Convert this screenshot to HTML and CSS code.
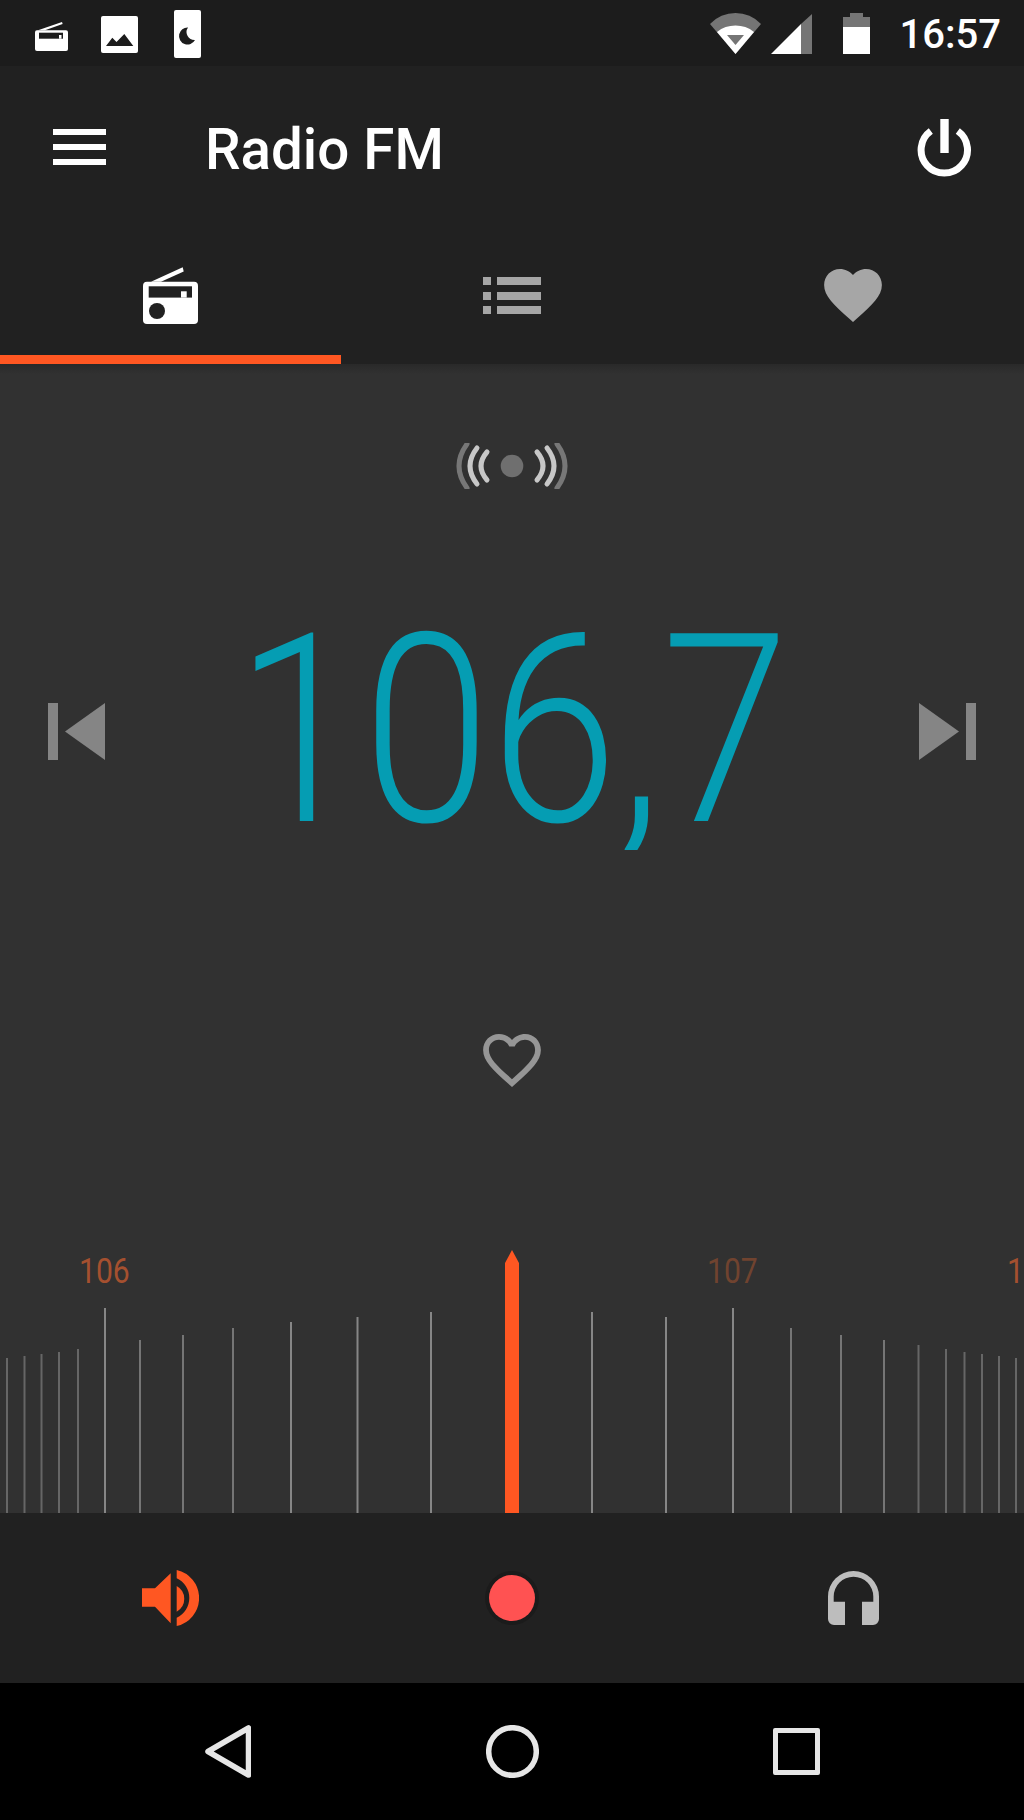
FILE: index.html
```
<!DOCTYPE html>
<html lang="en">
<head>
    <title>Radio FM</title>
    <link rel="stylesheet" href="styles.css">
</head>

<body>
    <div class="phone">
        <div class="status">
            <svg class="ic-s-radio" viewBox="0 -12 33 48">
                <path class="white" d="M3 8.3 27 0l.6 2L10 8.3z"/>
                <rect class="white" y="8.3" width="33" height="20.7" rx="2"/>
                <rect class="cut" x="4" y="10.7" width="24" height="6"/>
                <rect class="white" x="24" y="13" width="2.5" height="3.7"/>
            </svg>
            <svg class="ic-s-image" viewBox="0 -6 37 48">
                <rect class="white" width="37" height="37" rx="2"/>
                <path class="cut" d="M5 30l6.3-8.3 4.2 4.3 7.8-8 9 12z"/>
            </svg>
            <svg class="ic-s-phone" viewBox="0 0 27 48">
                <rect class="white" width="27" height="48" rx="2"/>
                <path class="cut" d="M14 17.5a8.5 8.5 0 1 0 7 12.5 8 8 0 0 1-7-12.5z"/>
            </svg>
            <div class="status-right">
                <svg class="ic-s-wifi" viewBox="0 -3 51 48">
                    <path class="dim" d="M0 11A35 35 0 0 1 51 11L25.5 41z"/>
                    <path class="white" d="M7 19A30 30 0 0 1 44 19L25.5 41z"/>
                    <path class="dim" d="M17 22H34L25.5 32z"/>
                </svg>
                <svg class="ic-s-signal" viewBox="0 -4 41 48">
                    <path class="white" d="M0 40H30V10z"/>
                    <path class="dim" d="M30 10 41 0V40H30z"/>
                </svg>
                <svg class="ic-s-battery" viewBox="0 -3 27 48">
                    <path class="dim" d="M7 0H20V4H27V14H0V4H7z"/>
                    <rect class="white" y="14" width="27" height="27"/>
                </svg>
                <span class="time">16:57</span>
            </div>
        </div>

        <div class="toolbar">
            <div class="menu"><span></span><span></span><span></span></div>
            <h1 class="title">Radio FM</h1>
            <svg class="ic-power" viewBox="0 0 55 58">
                <path class="power-ring" d="M13.8 12A23.2 23.2 0 1 0 40.8 12"/>
                <rect class="white" x="23.3" width="8.4" height="34"/>
            </svg>
        </div>

        <div class="tabs">
            <div class="tab active">
                <svg class="ic-tab-radio" viewBox="0 0 55 57">
                    <path class="white" d="M8 14.7 39.7.3l1 4.2L18 14.7z"/>
                    <rect class="white" y="14.7" width="55" height="42.3" rx="4"/>
                    <rect class="cut-tab" x="5.7" y="19.3" width="43.3" height="11.3"/>
                    <rect class="white" x="38" y="24.3" width="5.7" height="6.3"/>
                    <circle class="cut-tab" cx="14" cy="44" r="8"/>
                </svg>
            </div>
            <div class="tab">
                <svg class="ic-tab-list" viewBox="0 0 58 37">
                    <rect class="grey" width="8" height="8"/>
                    <rect class="grey" x="14" width="44" height="8"/>
                    <rect class="grey" y="15" width="8" height="8"/>
                    <rect class="grey" x="14" y="15" width="44" height="8"/>
                    <rect class="grey" y="29" width="8" height="8"/>
                    <rect class="grey" x="14" y="29" width="44" height="8"/>
                </svg>
            </div>
            <div class="tab">
                <svg class="ic-heart" viewBox="2 3 20 18.35">
                    <path class="grey" d="M12 21.35l-1.45-1.32C5.4 15.36 2 12.28 2 8.5 2 5.42 4.42 3 7.5 3c1.74 0 3.41.81 4.5 2.09C13.09 3.81 14.76 3 16.5 3 19.58 3 22 5.42 22 8.5c0 3.78-3.4 6.86-8.55 11.54L12 21.35z"/>
                </svg>
            </div>
        </div>

        <div class="tuner">
            <svg class="ic-signal" viewBox="-3 0 116 46">
                <g class="wave-out">
                    <path d="M10 1Q-6 23 10 45"/>
                    <path d="M100 1Q116 23 100 45"/>
                </g>
                <g class="wave-in">
                    <path d="M20 5Q6 23 20 41"/>
                    <path d="M90 5Q104 23 90 41"/>
                    <path d="M30 9Q18 23 30 37"/>
                    <path d="M80 9Q92 23 80 37"/>
                </g>
                <circle class="wave-dot" cx="55" cy="23" r="11.3"/>
            </svg>

            <div class="freq-row">
                <svg class="ic-skip" viewBox="0 0 57 57">
                    <rect class="skip" width="10" height="57"/>
                    <path class="skip" d="M17 28.5 57 0V57z"/>
                </svg>
                <div class="freq">106,7</div>
                <svg class="ic-skip" viewBox="0 0 57 57">
                    <rect class="skip" x="47" width="10" height="57"/>
                    <path class="skip" d="M40 28.5 0 0V57z"/>
                </svg>
            </div>

            <svg class="ic-fav" viewBox="2 3 20 18.35">
                <path class="fav" d="M16.5 3c-1.74 0-3.41.81-4.5 2.09C10.91 3.81 9.24 3 7.5 3 4.42 3 2 5.42 2 8.5c0 3.78 3.4 6.86 8.55 11.54L12 21.35l1.45-1.32C18.6 15.36 22 12.28 22 8.5 22 5.42 19.58 3 16.5 3zm-4.4 15.55l-.1.1-.1-.1C7.14 14.24 4 11.39 4 8.5 4 6.5 5.5 5 7.5 5c1.54 0 3.04.99 3.57 2.36h1.87C13.46 5.99 14.96 5 16.5 5c2 0 3.5 1.5 3.5 3.5 0 2.89-3.14 5.74-7.9 10.05z"/>
            </svg>

            <div class="dial">
                <span class="mark mark-106">106</span>
                <span class="mark mark-107">107</span>
                <span class="mark mark-108">1</span>
                <svg class="dial-ticks" viewBox="0 0 1024 273">
                    <g class="tick-far">
                        <path d="M7 118V273M24.5 116V273M41.5 114V273M59 112V273M78 109V273"/>
                        <path d="M1016 118V273M999 116V273M982 114V273M964.5 112V273M946 109V273M918.5 105V273"/>
                    </g>
                    <g class="tick-mid">
                        <path d="M140 100V273M183 95V273M233 88V273"/>
                        <path d="M884 100V273M841 95V273M791 88V273"/>
                    </g>
                    <g class="tick-near">
                        <path d="M105 68V273M291 82V273M357.5 77V273M431 72V273"/>
                        <path d="M592 72V273M666 77V273M733 68V273"/>
                    </g>
                    <path class="needle" d="M512 10 519 23V273H505V23z"/>
                </svg>
            </div>
        </div>

        <div class="controls">
            <svg class="ic-speaker" viewBox="0 0 57 56">
                <path class="orange" d="M0 18.3H13L28.7 3.3V53.3L13 36.7H0z"/>
                <path class="orange" d="M34.7 0A28.7 28.7 0 0 1 34.7 56V47.7A21.7 21.7 0 0 0 34.7 8.3z"/>
                <path class="orange" d="M34.7 16A14.7 14.7 0 0 1 34.7 41.7z"/>
            </svg>
            <div class="record"></div>
            <svg class="ic-phones" viewBox="0 0 51 54">
                <path class="phones" d="M0 25.5A25.5 25.5 0 0 1 51 25.5V48A6 6 0 0 1 45 54H34V30.7H45.3V25.5A19.8 19.8 0 0 0 5.7 25.5V30.7H17V54H6A6 6 0 0 1 0 48z"/>
            </svg>
        </div>

        <div class="nav">
            <svg class="ic-back" viewBox="0 0 46 53">
                <path class="nav-line" d="M3 26.5 43.5 3V50z"/>
            </svg>
            <svg class="ic-home" viewBox="0 0 53 53">
                <circle class="nav-line" cx="26.5" cy="26.5" r="23.8"/>
            </svg>
            <div class="nav-square"></div>
        </div>
    </div>
</body>

</html>
```

FILE: styles.css
```
* {
    box-sizing: border-box;
}

body {
    margin: 0;
    background-color: #000;
    font-family: Roboto, "Noto Sans", sans-serif;
}

svg {
    display: block;
    flex: none;
}

.phone {
    width: 1024px;
    height: 1820px;
    display: flex;
    flex-direction: column;
}

.white {
    fill: #fff;
}

.cut {
    fill: #1c1c1c;
}

.cut-tab {
    fill: #212121;
}

.dim {
    fill: #757575;
}

.grey {
    fill: #a6a6a6;
}

.orange {
    fill: #ff5722;
}

/* status bar */
.status {
    height: 66px;
    padding: 10px 23px 0 35px;
    display: flex;
    align-items: flex-start;
    background-color: #1c1c1c;
}

.status svg {
    height: 48px;
}

.ic-s-radio {
    width: 33px;
}

.ic-s-image {
    width: 37px;
    margin-left: 33px;
}

.ic-s-phone {
    width: 27px;
    margin-left: 36px;
}

.status-right {
    margin-left: auto;
    display: flex;
    align-items: flex-start;
}

.ic-s-wifi {
    width: 51px;
}

.ic-s-signal {
    width: 41px;
    margin-left: 10px;
}

.ic-s-battery {
    width: 27px;
    margin-left: 31px;
}

.time {
    margin-left: 30px;
    font-size: 40px;
    font-weight: 500;
    line-height: 50px;
    color: #fff;
}

/* toolbar */
.toolbar {
    height: 166px;
    padding: 0 52px 0 53px;
    display: flex;
    align-items: center;
    background-color: #212121;
}

.menu {
    width: 53px;
    margin-bottom: 4px;
    display: flex;
    flex-direction: column;
    gap: 9px;
}

.menu span {
    height: 6px;
    background-color: #fff;
}

.title {
    margin: 2px 0 0 99px;
    font-size: 56.5px;
    font-weight: 500;
    line-height: 66px;
    color: #fff;
}

.ic-power {
    width: 55px;
    height: 58px;
    margin-left: auto;
    margin-bottom: 3px;
}

.power-ring {
    fill: none;
    stroke: #fff;
    stroke-width: 7;
}

/* tabs */
.tabs {
    display: grid;
    grid-template-columns: 1fr 1fr 1fr;
    background-color: #212121;
}

.tab {
    height: 132px;
    padding-top: 4px;
    display: flex;
    align-items: center;
    justify-content: center;
    border-bottom: 9px solid transparent;
}

.tab.active {
    border-bottom-color: #ff5722;
}

.ic-tab-radio {
    width: 55px;
    height: 57px;
}

.ic-tab-list {
    width: 58px;
    height: 37px;
}

.ic-heart {
    width: 58px;
    height: 53px;
}

/* tuner */
.tuner {
    height: 1149px;
    padding-top: 79px;
    display: flex;
    flex-direction: column;
    align-items: center;
    background: linear-gradient(#292929, #313131 10px);
}

.ic-signal {
    width: 116px;
    height: 46px;
}

.wave-out path,
.wave-in path {
    fill: none;
    stroke-width: 5;
    stroke-linecap: round;
}

.wave-out path {
    stroke: #777;
}

.wave-in path {
    stroke: #c8c8c8;
}

.wave-dot {
    fill: #6f6f6f;
}

.freq-row {
    width: 100%;
    height: 220px;
    margin-top: 132px;
    padding: 0 48px;
    display: flex;
    align-items: center;
    justify-content: space-between;
}

.ic-skip {
    width: 57px;
    height: 57px;
}

.skip {
    fill: #858585;
}

.freq {
    font-size: 264px;
    font-weight: 300;
    line-height: 220px;
    color: #059db3;
    transform: scaleX(0.87);
    clip-path: inset(0 0 -9px 0);
}

.ic-fav {
    width: 58px;
    height: 53px;
    margin-top: 193px;
}

.fav {
    fill: #969696;
}

.dial {
    position: relative;
    width: 100%;
    height: 273px;
    margin-top: auto;
}

.dial-ticks {
    width: 1024px;
    height: 273px;
}

.tick-far path,
.tick-mid path,
.tick-near path {
    fill: none;
    stroke-width: 2;
}

.tick-far path {
    stroke: #666;
}

.tick-mid path {
    stroke: #757575;
}

.tick-near path {
    stroke: #868686;
}

.needle {
    fill: #ff5722;
}

.mark {
    position: absolute;
    top: 12px;
    font-size: 35px;
    line-height: 40px;
    color: #a5502f;
    transform: scaleX(0.86);
    transform-origin: left center;
}

.mark-106 {
    left: 79px;
}

.mark-107 {
    left: 707px;
    color: #70432f;
}

.mark-108 {
    left: 1007px;
}

/* bottom controls */
.controls {
    height: 170px;
    display: grid;
    grid-template-columns: 1fr 1fr 1fr;
    align-items: center;
    justify-items: center;
    background-color: #212121;
}

.ic-speaker {
    width: 57px;
    height: 56px;
}

.record {
    width: 46px;
    height: 46px;
    border-radius: 50%;
    background-color: #ff5252;
    box-shadow: 0 0 0 4px #1b1b1b;
}

.ic-phones {
    width: 51px;
    height: 54px;
}

.phones {
    fill: #bdbdbd;
}

/* navigation bar */
.nav {
    height: 137px;
    padding: 0 204px 0 205px;
    display: flex;
    align-items: center;
    justify-content: space-between;
    background-color: #000;
}

.ic-back {
    width: 46px;
    height: 53px;
}

.ic-home {
    width: 53px;
    height: 53px;
}

.nav-line {
    fill: none;
    stroke: #e6e6e6;
    stroke-width: 5.5;
    stroke-linejoin: round;
}

.nav-square {
    width: 47px;
    height: 47px;
    border: 5px solid #e6e6e6;
    border-radius: 2px;
}
```
